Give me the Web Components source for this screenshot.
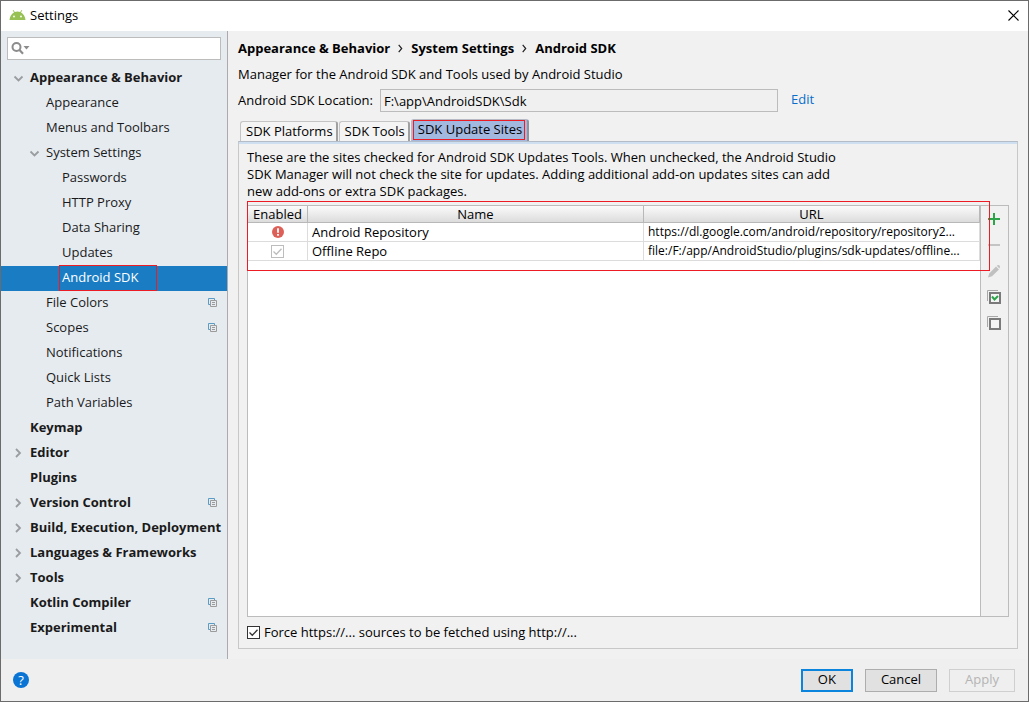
<!DOCTYPE html>
<html lang="en">
<head>
<meta charset="utf-8">
<title>Settings</title>
<style>
  html, body { margin: 0; height: 100%; }
  body { font: 13px/17px "Open Sans", "Noto Sans", sans-serif; color: #000; }
</style>
</head>
<body>
<settings-window></settings-window>
<script>
const define = (name, html, setup) => {
  const template = document.createElement('template');
  template.innerHTML = '<style>*{box-sizing:border-box}button,input{font:inherit;color:inherit;margin:0}button{padding:0}:focus{outline:none}</style>' + html;
  customElements.define(name, class extends HTMLElement {
    constructor() {
      super();
      this.attachShadow({ mode: 'open' }).append(template.content.cloneNode(true));
    }
    connectedCallback() { if (setup) setup(this, this.shadowRoot); }
  });
};

define('title-bar', `
<style>
  :host { display: flex; align-items: center; box-sizing: border-box; height: 30px; background: #fff; padding: 0 9px 2px 8px; gap: 4px; flex: none; }
  h1 { font: inherit; margin: 0; flex: 1; }
  button { border: 0; background: none; display: flex; }
  svg { display: block; }
</style>
<svg width="17" height="17" viewBox="0 0 17 17" aria-hidden="true">
  <path d="M.5 13C.8 9.300 2.500 6.700 5 5.400L3.700 3.300l.7-.4 1.400 2.200a8 8 0 0 1 5.400 0l1.400-2.200.7.4L12 5.400c2.500 1.300 4.200 3.900 4.500 7.600z" fill="#97c253"/>
  <circle cx="5" cy="9.500" r=".9" fill="#fff"/><circle cx="12" cy="9.500" r=".9" fill="#fff"/>
</svg>
<h1><slot></slot></h1>
<button type="button" aria-label="Close">
  <svg width="11" height="11" viewBox="0 0 11 11"><path d="M.5.5l10 10M10.500.5l-10 10" stroke="#000" stroke-width="1.100"/></svg>
</button>`);

define('search-field', `
<style>
  :host { display: flex; align-items: center; box-sizing: border-box; height: 23px; border: 1px solid #bcbcbc; background: #fff; padding: 0 3px; }
  input { flex: 1; min-width: 0; border: 0; background: none; }
</style>
<svg width="19" height="15" viewBox="0 0 19 15" aria-hidden="true">
  <circle cx="5.500" cy="6" r="4" fill="none" stroke="#8c8c8c" stroke-width="2"/>
  <path d="M8.500 9l3.500 3.700" stroke="#8c8c8c" stroke-width="2.200"/>
  <path d="M12.500 5h6l-3 3.500z" fill="#8c8c8c"/>
</svg>
<input type="text" aria-label="Search settings">`);

define('tree-item', `
<style>
  :host { display: block; }
  a { display: flex; align-items: center; height: 25px; padding: 0 9px 2px 29px; color: #1a1a1a; text-decoration: none; white-space: nowrap; }
  :host([level="2"]) a { padding-left: 45px; }
  :host([level="3"]) a { padding-left: 61px; }
  :host([level="1"]) { font-weight: 700; }
  .arrow { width: 17px; margin-left: -17px; display: none; flex: none; }
  :host([state]) .arrow { display: block; }
  :host([state="closed"]) .down, :host([state="open"]) .right { display: none; }
  .label { flex: 1; }
  .copy { display: none; flex: none; }
  :host([project]) .copy { display: block; }
  :host([selected]) a { background: #1a7dc4; color: #fff; }
  :host([selected]) .label { flex: none; padding: 3px 18px 4px 2px; margin-left: -3px; border: 1px solid #ed1c24; }
</style>
<a href="#">
  <svg class="arrow" width="17" height="12" viewBox="0 0 17 12" aria-hidden="true">
    <path class="down" d="M1.500 4.500L5.500 8.500 9.500 4.500" fill="none" stroke="#9a9da0" stroke-width="1.800"/>
    <path class="right" d="M3 2L7 6 3 10" fill="none" stroke="#9a9da0" stroke-width="1.800"/>
  </svg>
  <span class="label"><slot></slot></span>
  <svg class="copy" width="10" height="10" viewBox="0 0 10 10" aria-hidden="true">
    <path d="M2.500 6.500h-2v-6h6v2" fill="none" stroke="#5a9cc4"/>
    <path d="M2.500 2.500h6v6h-6zM4 4.500h3M4 6.500h3" fill="none" stroke="#9b9b9b"/>
  </svg>
</a>`);

define('settings-tree', `
<style>
  :host { display: flex; flex-direction: column; box-sizing: border-box; flex: none; width: 227px; background: #e6ebf0; border-right: 1px solid #ababab; padding-bottom: 18px; }
  search-field { margin: 6px; }
</style>
<search-field></search-field>
<nav aria-label="Settings"><slot></slot></nav>`);

define('check-box', `
<style>
  :host { display: inline-block; --ink: #333; }
  :host([disabled]) { --ink: #bdbdbd; }
  label { display: flex; align-items: center; gap: 4px; }
  .box { display: grid; flex: none; }
  .box > * { grid-area: 1 / 1; }
  input { appearance: none; width: 13px; height: 13px; border: 1px solid var(--ink); background: #fff; }
  svg { pointer-events: none; position: relative; }
</style>
<label><span class="box"><input type="checkbox" checked><svg width="13" height="13" viewBox="0 0 13 13" aria-hidden="true"><path d="M2.500 6.500L5.300 9.300 10.500 3.800" fill="none" stroke="var(--ink)" stroke-width="1.300"/></svg></span><slot></slot></label>`,
(host, root) => {
  const input = root.querySelector('input');
  input.disabled = host.hasAttribute('disabled');
  if (host.hasAttribute('label')) input.setAttribute('aria-label', host.getAttribute('label'));
});

define('crumb-trail', `
<style>
  :host { display: block; font-weight: 700; }
  ol, li { display: flex; align-items: center; gap: 8px; }
  ol { list-style: none; margin: 0; padding: 0; }
</style>
<ol></ol>`, (host, root) => {
  root.querySelector('ol').innerHTML = host.getAttribute('path').split('/').map((part, i) =>
    '<li>' + (i ? '<svg width="5" height="9" viewBox="0 0 5 9" aria-hidden="true"><path d="M.7.8l3 3.700-3 3.700" fill="none" stroke="#222" stroke-width="1.200"/></svg>' : '') +
    '<span>' + part.replace('&', '&amp;') + '</span></li>').join('');
});

define('location-row', `
<style>
  :host { display: flex; align-items: center; }
  label { width: 142px; flex: none; }
  input { flex: 0 1 398px; min-width: 0; height: 23px; border: 1px solid #bcbcbc; background: #f0f0f0; padding: 0 3px; }
  a { margin-left: 13px; color: #0a6ecb; text-decoration: none; padding-bottom: 2px; }
</style>
<label for="path">Android SDK Location:</label>
<input id="path" type="text" readonly value="F:\\app\\AndroidSDK\\Sdk">
<a href="#">Edit</a>`);

define('tab-button', `
<style>
  :host { display: block; }
  button { display: block; height: 20px; padding: 0 3px 0 5px; border: 1px solid #c4c4c4; border-right: 2px solid #a0a0a0; border-bottom: 0; border-radius: 3px 3px 0 0; background: #f4f4f4; white-space: nowrap; }
  :host([selected]) button { height: 22px; padding: 0 2px 1px 1px; border-color: #b5bac4; border-right-color: #8e939c; background: #a3b8df; }
  :host([selected]) span { display: block; height: 20px; line-height: 17px; padding: 0 2px 0 4px; border: 1px solid #ed1c24; }
</style>
<button type="button" role="tab"><span><slot></slot></span></button>`,
(host, root) => root.querySelector('button').setAttribute('aria-selected', host.hasAttribute('selected')));

define('tool-strip', `
<style>
  :host { display: flex; flex-direction: column; box-sizing: border-box; gap: 10px; width: 28px; flex: none; border-left: 1px solid #bcbcbc; padding: 5px 0 0 5px; }
  button { border: 0; background: none; display: block; width: 16px; height: 16px; }
  svg { display: block; }
</style>
<button type="button" aria-label="Add"><svg width="16" height="16"><path d="M2 8h12M8 2v12" stroke="#2da44a" stroke-width="2"/></svg></button>
<button type="button" aria-label="Remove" disabled><svg width="16" height="16"><path d="M2 8h12" stroke="#c4c4c4" stroke-width="2"/></svg></button>
<button type="button" aria-label="Edit" disabled><svg width="16" height="16"><path d="M2 14.500l1.200-4L10 3.500l3 3-7 6.800zM10.800 2.800L12 2q2.500.2 1.800 2.800l-.4.800z" fill="#c0c0c0"/></svg></button>
<button type="button" aria-label="Select all"><svg width="16" height="16"><path d="M1.500 12V1.500H12" fill="none" stroke="#a8a8a8"/><path d="M4 4h10v10H4z" fill="#f4f4f4" stroke="#7a7a7a" stroke-width="2"/><path d="M6 7.500l2.500 3 3.500-3.500" fill="none" stroke="#2da44a" stroke-width="2"/></svg></button>
<button type="button" aria-label="Deselect all"><svg width="16" height="16"><path d="M1.500 12V1.500H12" fill="none" stroke="#a8a8a8"/><path d="M4 4h10v10H4z" fill="#f4f4f4" stroke="#7a7a7a" stroke-width="2"/></svg></button>`);

define('sites-table', `
<style>
  :host { display: flex; flex: 1; position: relative; border: 1px solid #bcbcbc; min-height: 160px; }
  .sheet { flex: 1; min-width: 0; background: #fff; }
  table { width: 100%; border-collapse: separate; border-spacing: 0; table-layout: fixed; }
  col.on { width: 60px; }
  th { height: 17px; padding: 0; font-weight: 400; line-height: 16px; background: linear-gradient(#fbfbfb, #dcdcdc); border: 0 solid #b8b8b8; border-width: 0 1px 1px 0; }
  td { height: 19px; padding: 0 0 0 4px; line-height: 18px; border: 0 solid #dcdcdc; border-width: 0 1px 1px 0; white-space: nowrap; }
  td:first-child { padding: 0; }
  td:last-child { font-size: 12px; }
  .mid { display: flex; justify-content: center; }
  .mark { position: absolute; inset: -5px 18px auto -1px; height: 70px; border: 1px solid #ed1c24; pointer-events: none; }
</style>
<div class="sheet">
<table>
  <colgroup><col class="on"><col><col></colgroup>
  <thead><tr><th scope="col">Enabled</th><th scope="col">Name</th><th scope="col">URL</th></tr></thead>
  <tbody>
    <tr><td><div class="mid"><svg width="12" height="12" viewBox="0 0 12 12" role="img" aria-label="Error"><circle cx="6" cy="6" r="6" fill="#dd6058"/><path d="M6 2.200v4.600M6 8v1.700" stroke="#fff" stroke-width="1.800"/></svg></div></td><td>Android Repository</td><td>https://dl.google.com/android/repository/repository2...</td></tr>
    <tr><td><div class="mid"><check-box disabled label="Enable Offline Repo"></check-box></div></td><td>Offline Repo</td><td>file:/F:/app/AndroidStudio/plugins/sdk-updates/offline...</td></tr>
  </tbody>
</table>
</div>
<tool-strip></tool-strip>
<div class="mark"></div>`);

define('dialog-button', `
<style>
  :host { display: block; flex: none; }
  button { min-width: 52px; height: 23px; padding: 0 15px 2px; border: 1px solid #adadad; background: #e1e1e1; display: block; }
  :host([primary]) button { border: 2px solid #0a84dc; padding: 0 14px 2px; }
  :host([disabled]) button { border-color: #cfcfcf; background: #efefef; color: #b4b4b4; }
</style>
<button type="button"><slot></slot></button>`,
(host, root) => { root.querySelector('button').disabled = host.hasAttribute('disabled'); });

define('dialog-footer', `
<style>
  :host { display: flex; align-items: center; box-sizing: border-box; gap: 12px; height: 42px; flex: none; padding: 0 13px 0 12px; background: #efefef; }
  .help { width: 16px; height: 16px; border: 0; border-radius: 50%; background: #0a74d4; color: #fff; line-height: 16px; margin-right: auto; }
</style>
<button class="help" type="button" aria-label="Help">?</button>
<slot></slot>`);

define('settings-window', `
<style>
  :host { display: flex; flex-direction: column; box-sizing: border-box; min-height: 100%; border: 1px solid #6b6b6b; background: #f1f1f1; }
  .body { display: flex; flex: 1; }
  main { flex: 1; min-width: 0; display: flex; flex-direction: column; padding: 9px 10px 10px; }
  crumb-trail { margin-bottom: 9px; }
  p { margin: 0; }
  location-row { margin: 6px 0 7px; }
  .tabs { display: flex; align-items: flex-end; height: 22px; padding-left: 2px; gap: 1px; flex: none; }
  .pane { flex: 1; display: flex; flex-direction: column; border: 1px solid #c8c8c8; border-top-color: #b4bcc8; box-shadow: inset 0 2px #cfdff2; padding: 7px 8px; }
  .note { margin-bottom: 5px; }
  sites-table { margin-bottom: 7px; }
</style>
<title-bar>Settings</title-bar>
<div class="body">
  <settings-tree>
    <tree-item level="1" state="open">Appearance &amp; Behavior</tree-item>
    <tree-item level="2">Appearance</tree-item>
    <tree-item level="2">Menus and Toolbars</tree-item>
    <tree-item level="2" state="open">System Settings</tree-item>
    <tree-item level="3">Passwords</tree-item>
    <tree-item level="3">HTTP Proxy</tree-item>
    <tree-item level="3">Data Sharing</tree-item>
    <tree-item level="3">Updates</tree-item>
    <tree-item level="3" selected>Android SDK</tree-item>
    <tree-item level="2" project>File Colors</tree-item>
    <tree-item level="2" project>Scopes</tree-item>
    <tree-item level="2">Notifications</tree-item>
    <tree-item level="2">Quick Lists</tree-item>
    <tree-item level="2">Path Variables</tree-item>
    <tree-item level="1">Keymap</tree-item>
    <tree-item level="1" state="closed">Editor</tree-item>
    <tree-item level="1">Plugins</tree-item>
    <tree-item level="1" state="closed" project>Version Control</tree-item>
    <tree-item level="1" state="closed">Build, Execution, Deployment</tree-item>
    <tree-item level="1" state="closed">Languages &amp; Frameworks</tree-item>
    <tree-item level="1" state="closed">Tools</tree-item>
    <tree-item level="1" project>Kotlin Compiler</tree-item>
    <tree-item level="1" project>Experimental</tree-item>
  </settings-tree>
  <main>
    <crumb-trail path="Appearance &amp; Behavior/System Settings/Android SDK"></crumb-trail>
    <p>Manager for the Android SDK and Tools used by Android Studio</p>
    <location-row></location-row>
    <div class="tabs" role="tablist">
      <tab-button>SDK Platforms</tab-button>
      <tab-button>SDK Tools</tab-button>
      <tab-button selected>SDK Update Sites</tab-button>
    </div>
    <div class="pane" role="tabpanel">
      <p class="note">These are the sites checked for Android SDK Updates Tools. When unchecked, the Android Studio<br>SDK Manager will not check the site for updates. Adding additional add-on updates sites can add<br>new add-ons or extra SDK packages.</p>
      <sites-table></sites-table>
      <check-box>Force https://... sources to be fetched using http://...</check-box>
    </div>
  </main>
</div>
<dialog-footer>
  <dialog-button primary>OK</dialog-button>
  <dialog-button>Cancel</dialog-button>
  <dialog-button disabled>Apply</dialog-button>
</dialog-footer>`);
</script>
</body>
</html>
